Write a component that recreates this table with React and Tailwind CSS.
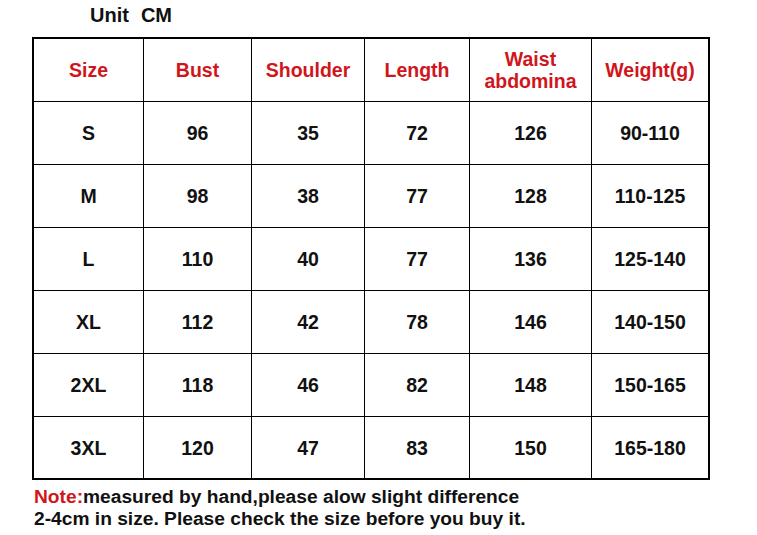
const headers = ['Size', 'Bust', 'Shoulder', 'Length', 'Waist\nabdomina', 'Weight(g)'];

const rows = [
  ['S', '96', '35', '72', '126', '90-110'],
  ['M', '98', '38', '77', '128', '110-125'],
  ['L', '110', '40', '77', '136', '125-140'],
  ['XL', '112', '42', '78', '146', '140-150'],
  ['2XL', '118', '46', '82', '148', '150-165'],
  ['3XL', '120', '47', '83', '150', '165-180'],
];

function Cell({ children, red, lastCol, lastRow }) {
  return (
    <div
      className={`flex items-center justify-center whitespace-pre-line text-center leading-[22px] border-black ${
        lastCol ? '' : 'border-r'
      } ${lastRow ? '' : 'border-b'} ${red ? 'text-[#d0161c]' : 'text-[#111]'}`}
    >
      {children}
    </div>
  );
}

export default function App() {
  return (
    <div className="h-[535px] w-[757px] bg-white font-['Liberation_Sans',Arial,sans-serif] text-[19.5px] font-bold">
      <p className="flex gap-[12px] pl-[90px] pt-[2px] text-[20px] leading-[26px] text-[#111]">
        <span>Unit</span>
        <span>CM</span>
      </p>
      <div className="ml-[32px] mt-[9px] grid h-[443px] w-[678px] grid-cols-[110px_108px_113px_105px_122px_116px] grid-rows-[63px_63px_63px_63px_63px_63px_62px] border-2 border-black">
        {headers.map((h, i) => (
          <Cell key={h} red lastCol={i === 5}>
            {h}
          </Cell>
        ))}
        {rows.map((row, r) =>
          row.map((v, i) => (
            <Cell key={`${r}-${i}`} lastCol={i === 5} lastRow={r === rows.length - 1}>
              {v}
            </Cell>
          ))
        )}
      </div>
      <div className="pl-[34px] pt-[6px] text-[19.2px] leading-[22px] text-[#111]">
        <p>
          <span className="text-[#d0161c]">Note:</span>measured by hand,please alow slight difference
        </p>
        <p>2-4cm in size. Please check the size before you buy it.</p>
      </div>
    </div>
  );
}
